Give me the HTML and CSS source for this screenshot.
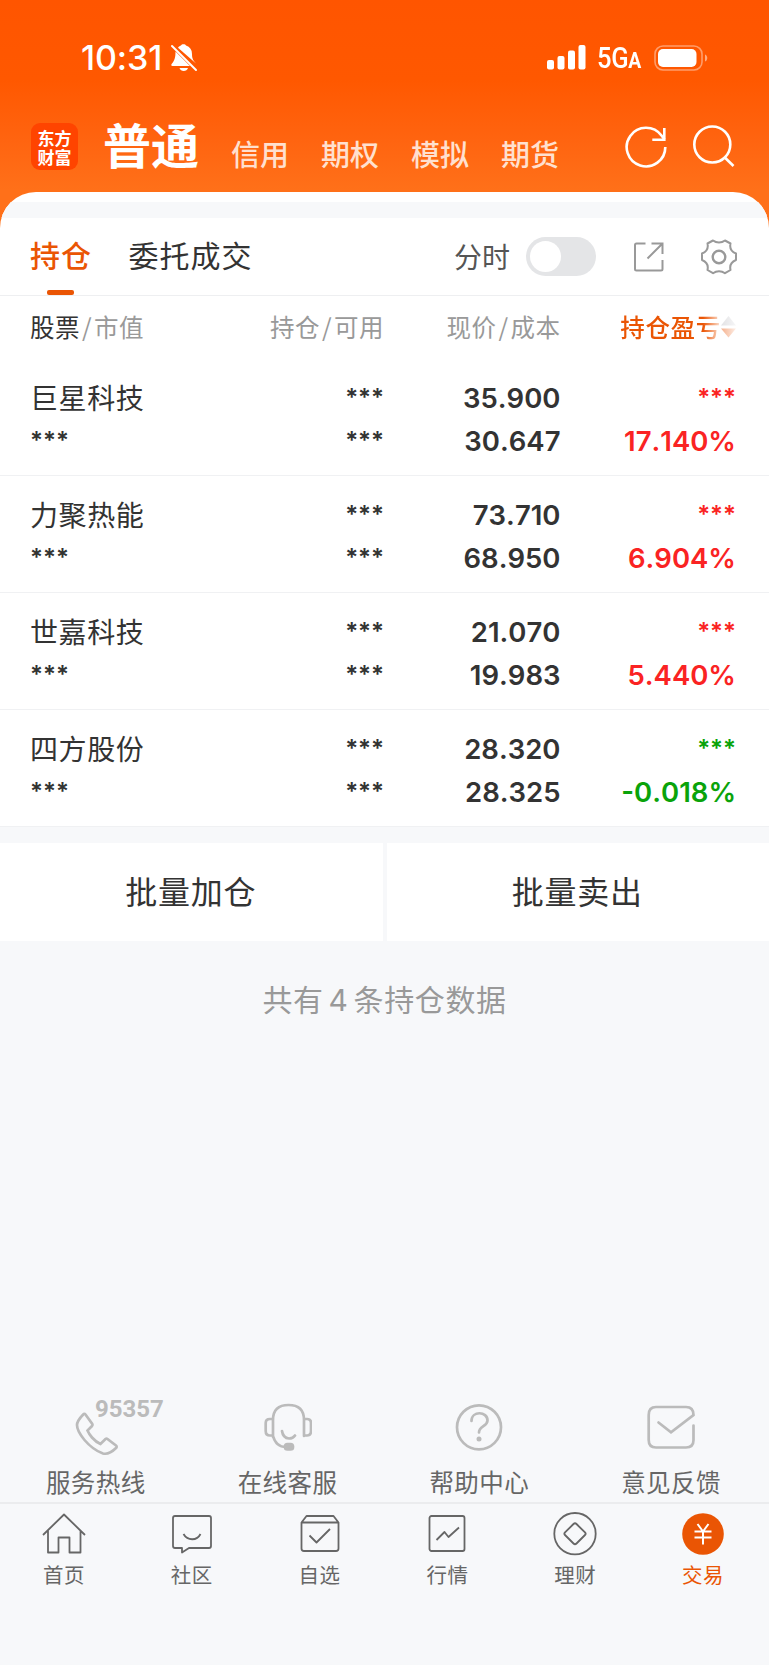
FILE: index.html
```
<!DOCTYPE html>
<html lang="zh-CN">
<head>
	<meta charset="utf-8">
	<title>交易 - 持仓</title>
	<link rel="stylesheet" href="styles.css">
</head>
<body>
	<div class="page">
		<header class="top">
			<div class="status">
				<span class="time">10:31</span>
				<svg class="bell" width="28" height="30" viewBox="0 0 28 30">
					<path fill="#fff" d="M8 4.800C9 3.500 10 3 11 2.600C11.500 .9 15.500 .9 16 2.600C20 4 22 7 22 11C22 15.500 23 17 26 20.500ZM5.500 8.500L20 23H2.500C1 23 1 21.500 2 20.500C4.500 17.500 5.500 15 5.500 8.500ZM9.500 25H18C17 29 10.500 29 9.500 25Z"/>
					<path stroke="#fff" stroke-width="2" stroke-linecap="round" d="M2 3L26 27"/>
				</svg>
				<svg class="signal" width="39" height="25" viewBox="0 0 39 25" fill="#fff">
					<rect x="0" y="15" width="7" height="9.500" rx="2"/>
					<rect x="10.500" y="11" width="7" height="13.500" rx="2"/>
					<rect x="21" y="5.500" width="7" height="19" rx="2"/>
					<rect x="31.500" y="0" width="7" height="24.500" rx="2"/>
				</svg>
				<span class="net">5G<small>A</small></span>
				<svg class="battery" width="54" height="26" viewBox="0 0 54 26">
					<rect x="1" y="1" width="47" height="24" rx="8" fill="none" stroke="#fff" stroke-opacity=".42" stroke-width="1.600"/>
					<rect x="4" y="4" width="38.500" height="18" rx="5" fill="#fff"/>
					<path d="M51 9.500C54 10.500 54 15.500 51 16.500Z" fill="#fff" fill-opacity=".5"/>
				</svg>
			</div>
			<nav class="accounts">
				<div class="logo"><span>东方</span><span>财富</span></div>
				<a class="account active">普通</a>
				<a class="account">信用</a>
				<a class="account">期权</a>
				<a class="account">模拟</a>
				<a class="account">期货</a>
				<svg class="refresh" width="44" height="44" viewBox="0 0 44 44" fill="none" stroke="#fff" stroke-width="2.600">
					<path d="M41.300 22A19.300 19.300 0 1 1 37.500 10.600L40.500 14.500"/>
					<path d="M40.300 3V14.700H28.300"/>
				</svg>
				<svg class="search" width="44" height="44" viewBox="0 0 44 44" fill="none" stroke="#fff" stroke-width="2.600">
					<circle cx="20.300" cy="19.500" r="18"/>
					<path d="M32.800 32.500L41.500 41"/>
				</svg>
			</nav>
		</header>

		<main class="card">
			<div class="strip"></div>
			<div class="tabs">
				<a class="tab active">持仓</a>
				<a class="tab">委托成交</a>
				<span class="label">分时</span>
				<span class="switch"></span>
				<svg class="share" width="30" height="30" viewBox="0 0 30 30" fill="none" stroke="#999" stroke-width="2">
					<path d="M11.500 1.500H2.500Q1 1.500 1 3V27Q1 28.500 2.500 28.500H27Q28.500 28.500 28.500 27V18"/>
					<path d="M17.500 1.500H28.500V12M28 2L13.500 16.500"/>
				</svg>
				<svg class="gear" width="38" height="36" viewBox="0 0 38 36" fill="none" stroke="#999" stroke-width="2">
					<path stroke-linejoin="round" d="M13 1.500C15 3 17 3.500 19 3.500S23 3 25 1.500L30.500 4.500C29.500 9 31 12.500 36 14.500V21C31 23 29.500 26.500 30.500 31L25 34.200C23 32.700 21 32.200 19 32.200S15 32.700 13 34.200L7.500 31C8.500 26.500 7 23 2 21V14.500C7 12.500 8.500 9 7.500 4.500Z"/>
					<circle cx="19" cy="18" r="6.300" stroke-width="2.400"/>
				</svg>
			</div>

			<div class="row head">
				<div class="col"><b>股票</b><i>/</i>市值</div>
				<div class="col">持仓<i>/</i>可用</div>
				<div class="col">现价<i>/</i>成本</div>
				<div class="col sort">
					<span>持仓盈亏</span>
					<svg width="15" height="22" viewBox="0 0 15 22">
						<path d="M7.500 0L15 9.500H0Z" fill="url(#sortUp)"/>
						<path d="M0 12.500H15L7.500 21.500Z" fill="url(#sortDown)"/>
						<defs>
							<linearGradient id="sortUp"><stop stop-color="#e2e2e4"/><stop offset="1" stop-color="#f6f6f7"/></linearGradient>
							<linearGradient id="sortDown"><stop stop-color="#f5b08c"/><stop offset="1" stop-color="#fdeee6"/></linearGradient>
						</defs>
					</svg>
				</div>
			</div>

			<div class="row stock">
				<div class="col"><p class="name">巨星科技</p><p class="mask">***</p></div>
				<div class="col"><p class="mask">***</p><p class="mask">***</p></div>
				<div class="col"><p>35.900</p><p>30.647</p></div>
				<div class="col up"><p class="mask">***</p><p>17.140%</p></div>
			</div>
			<div class="row stock">
				<div class="col"><p class="name">力聚热能</p><p class="mask">***</p></div>
				<div class="col"><p class="mask">***</p><p class="mask">***</p></div>
				<div class="col"><p>73.710</p><p>68.950</p></div>
				<div class="col up"><p class="mask">***</p><p>6.904%</p></div>
			</div>
			<div class="row stock">
				<div class="col"><p class="name">世嘉科技</p><p class="mask">***</p></div>
				<div class="col"><p class="mask">***</p><p class="mask">***</p></div>
				<div class="col"><p>21.070</p><p>19.983</p></div>
				<div class="col up"><p class="mask">***</p><p>5.440%</p></div>
			</div>
			<div class="row stock">
				<div class="col"><p class="name">四方股份</p><p class="mask">***</p></div>
				<div class="col"><p class="mask">***</p><p class="mask">***</p></div>
				<div class="col"><p>28.320</p><p>28.325</p></div>
				<div class="col down"><p class="mask">***</p><p>-0.018%</p></div>
			</div>
		</main>

		<div class="batch">
			<a>批量加仓</a>
			<a>批量卖出</a>
		</div>
		<p class="total">共有<span>4</span>条持仓数据</p>

		<section class="services">
			<a class="service">
				<svg width="48" height="56" viewBox="0 0 48 56">
					<path d="M11.200 14.500Q12.300 13 13.500 14.500L20.300 24Q20.800 25 20 26L15.500 30.500Q17 34 20 37.500Q24 42 28.500 44L33.500 39Q34.500 38.200 35.500 39L44 45.500Q45.300 46.500 44 48Q37 55 31 53.500Q21 50 12.500 40Q5 31 5 25Q5 21 11.200 14.500Z"/>
				</svg>
				<em>95357</em>
				服务热线
			</a>
			<a class="service">
				<svg width="48" height="56" viewBox="0 0 48 56">
					<path d="M9 37V20Q9 5 24.500 5T40 20V36M9 19H6Q1.700 19 1.700 23V31Q1.700 35.500 6 35.500H9M40 19H43Q47 19 47 23V31Q47 35.500 43 35.500H40M9 36Q12 47 22 47M18 31Q19 38 25 38.500Q29 38.500 31 35.500"/>
					<rect class="solid" x="21" y="44" width="8" height="5.500" rx="2.500"/>
				</svg>
				在线客服
			</a>
			<a class="service">
				<svg width="48" height="56" viewBox="0 0 48 56">
					<circle cx="24" cy="27.300" r="22"/>
					<path d="M16.500 21C16.500 10.500 32.500 11 32.500 20.500C32.500 26.500 24 26 24 32.500"/>
					<circle class="solid dot" cx="24" cy="39" r="2.500"/>
				</svg>
				帮助中心
			</a>
			<a class="service">
				<svg width="48" height="56" viewBox="0 0 48 56">
					<path d="M46.500 25.500V40Q46.500 47.500 39 47.500H9Q1.700 47.500 1.700 40V15Q1.700 7 9 7H39Q46.500 7 46.500 15L24 32.300L11.500 22.500"/>
				</svg>
				意见反馈
			</a>
		</section>

		<nav class="tabbar">
			<a>
				<svg width="44" height="44" viewBox="0 0 44 44"><path d="M1 23L22 2.500L43 23M6 18.500V40.500H16.500V25.500H27.500V40.500H38.500V18.500"/></svg>
				首页
			</a>
			<a>
				<svg width="44" height="44" viewBox="0 0 44 44"><path d="M5 4H39Q41 4 41 6V34Q41 36 39 36H19L12 40.500V36H5Q3 36 3 34V6Q3 4 5 4ZM13.500 22C17.500 29 27 29 30.500 22"/></svg>
				社区
			</a>
			<a>
				<svg width="44" height="44" viewBox="0 0 44 44"><path d="M3.500 10.500L8.500 4H35.500L40.500 10.500V36.500Q40.500 39 38 39H6Q3.500 39 3.500 36.500ZM3.500 10.500H40.500M11.500 23.500L18.500 30.500L32 17"/></svg>
				自选
			</a>
			<a>
				<svg width="44" height="44" viewBox="0 0 44 44"><rect x="4.500" y="4" width="35" height="35" rx="2"/><path d="M11.500 28L19.500 20L23.500 25L34 15.500"/></svg>
				行情
			</a>
			<a>
				<svg width="44" height="44" viewBox="0 0 44 44"><circle cx="22" cy="21.700" r="20.700"/><path d="M20.500 12Q22 10.500 23.500 12L32 20.300Q33.300 21.700 32 23L23.500 31.500Q22 33 20.500 31.500L12 23Q10.700 21.700 12 20.300Z"/></svg>
				理财
			</a>
			<a class="active">
				<svg width="44" height="44" viewBox="0 0 44 44"><circle class="disc" cx="22" cy="22" r="20.800"/><path class="yen" d="M16.500 12L22 19.500L27.500 12M22 19.500V32.500M13.500 19.500H30.500M13.500 25.500H30.500"/></svg>
				交易
			</a>
		</nav>
	</div>
</body>
</html>
```
FILE: styles.css
```
* {
	box-sizing: border-box;
	margin: 0;
	padding: 0;
}
body {
	background-color: #f7f8fa;
	font-family: "Noto Sans CJK SC", sans-serif;
	color: #333;
}
.page {
	display: flex;
	flex-direction: column;
	width: 769px;
	height: 1665px;
	background: linear-gradient(#ff5500 0, #ff5800 80px, #ff6410 140px, #ff7019 190px, #ff7019 240px, transparent 240px);
}

/* 顶部 */
.top {
	height: 192px;
	color: #fff;
}
.status {
	display: flex;
	align-items: center;
	height: 115px;
	padding-left: 81px;
	font-family: Inter, sans-serif;
}
.time {
	width: 89px;
	font-size: 34px;
	font-weight: 500;
	letter-spacing: -.1px;
}
.signal {
	margin-left: 349px;
}
.net {
	width: 56px;
	margin-left: 11px;
	font-family: Roboto, sans-serif;
	font-size: 29px;
	font-weight: 500;
	letter-spacing: -.3px;
	transform: scaleX(.88);
	transform-origin: 0 50%;
}
.net small {
	font-size: 22px;
	font-weight: 700;
}
.battery {
	margin-left: 1px;
}
.accounts {
	display: flex;
	align-items: center;
	height: 64px;
	padding-left: 31px;
}
.logo {
	display: flex;
	flex-direction: column;
	align-items: center;
	justify-content: center;
	gap: 2px;
	width: 47px;
	height: 47px;
	margin: -1px 25px 0 0;
	background-color: #ff4400;
	border-radius: 9px;
	font-size: 17px;
	font-weight: 700;
	line-height: 17px;
}
.logo span {
	height: 17px;
}
.account {
	width: 90px;
	padding-top: 12px;
	font-size: 29px;
	font-weight: 500;
	line-height: 40px;
	color: #ffe0cf;
}
.account.active {
	width: 128px;
	padding: 0 0 8px;
	font-size: 48px;
	font-weight: 700;
	color: #fff;
}
.refresh {
	margin-left: 32.500px;
}
.search {
	margin-left: 24.500px;
}

/* 持仓列表 */
.card {
	background-color: #fff;
	border-radius: 36px 36px 0 0;
	overflow: hidden;
	flex: none;
}
.strip {
	height: 16px;
	margin-top: 10px;
	background-color: #f7f8fa;
}
.tabs {
	display: flex;
	align-items: center;
	height: 78px;
	padding-left: 30px;
	border-bottom: 1px solid #eeeff1;
}
.tab {
	position: relative;
	height: 77px;
	margin-right: 36.500px;
	font-size: 30px;
	letter-spacing: 1px;
	line-height: 73px;
}
.tab.active {
	color: #ea5504;
	font-weight: 500;
}
.tab.active::after {
	content: "";
	position: absolute;
	left: 17px;
	bottom: 0;
	width: 27px;
	height: 5px;
	background-color: #ea5504;
	border-radius: 2px;
}
.label {
	width: 72px;
	margin: -2px 0 0 auto;
	font-size: 28px;
	color: #555;
}
.switch {
	width: 70px;
	height: 39px;
	padding: 4px;
	background-color: #e4e5e7;
	border-radius: 20px;
}
.switch::before {
	content: "";
	display: block;
	width: 31px;
	height: 31px;
	background-color: #fff;
	border-radius: 50%;
}
.share {
	margin-left: 38px;
}
.gear {
	margin: 0 31px 0 36px;
}
.row {
	display: grid;
	grid-template-columns: 200px 154px 176.500px 175.500px;
	padding-left: 30px;
}
.col {
	text-align: right;
}
.col:first-child {
	text-align: left;
}
.head {
	height: 63px;
	font-size: 24.500px;
	letter-spacing: .5px;
	line-height: 61px;
	color: #999;
}
.head b {
	font-weight: 400;
	color: #333;
}
.head i {
	margin: 0 2px;
	font-style: normal;
}
.sort {
	display: flex;
	align-items: center;
	justify-content: flex-end;
	height: 61px;
	letter-spacing: .7px;
	color: #ea5504;
	font-weight: 500;
}
.sort span {
	-webkit-mask-image: linear-gradient(to right, #000 82%, rgba(0,0,0,.15));
	mask-image: linear-gradient(to right, #000 82%, rgba(0,0,0,.15));
}
.stock {
	height: 117px;
	padding-top: 18px;
	border-bottom: 1px solid #f0f1f3;
	font-family: Inter, sans-serif;
	font-size: 27.500px;
	font-weight: 600;
	font-kerning: none;
	line-height: 42.500px;
}
.stock p {
	height: 42.500px;
}
.stock .name {
	font-family: "Noto Sans CJK SC", sans-serif;
	font-size: 28px;
	font-weight: 400;
	letter-spacing: .6px;
	line-height: 40px;
}
.stock .mask {
	font-size: 24px;
}
.up {
	color: #fa2323;
}
.down {
	color: #0aa30a;
}

/* 批量操作 */
.batch {
	display: flex;
	gap: 4px;
	flex: none;
	padding-top: 16px;
	background-color: #f7f8fa;
}
.batch a {
	flex: 1;
	height: 98px;
	padding-right: 1px;
	background-color: #fff;
	font-size: 32px;
	letter-spacing: .7px;
	line-height: 95px;
	text-align: center;
}
.total {
	flex: 1;
	padding-top: 35px;
	background-color: #f7f8fa;
	font-size: 30px;
	letter-spacing: .6px;
	line-height: 44px;
	text-align: center;
	color: #999;
}
.total span {
	margin: 0 5px;
	font-family: Inter, sans-serif;
}

/* 服务入口 */
.services {
	display: grid;
	grid-template-columns: repeat(4, 1fr);
	height: 102px;
	padding-right: 2px;
	color: #666;
	background-color: #f7f8fa;
}
.service {
	position: relative;
	display: flex;
	flex-direction: column;
	align-items: center;
	font-size: 24.500px;
	letter-spacing: .5px;
	line-height: 51px;
}
.service svg {
	fill: none;
	stroke: #bbb;
	stroke-width: 2.700;
	stroke-linecap: round;
	flex: none;
}
.service .solid {
	fill: #bbb;
}
.service .dot {
	stroke: none;
}
.service em {
	position: absolute;
	left: 95px;
	top: -3px;
	font: 700 24px/24px Roboto, sans-serif;
	letter-spacing: 0;
	color: #bbb;
}

/* 底部导航 */
.tabbar {
	display: grid;
	grid-template-columns: repeat(6, 1fr);
	height: 163px;
	padding: 8px 2px 0 0;
	background-color: #f7f8fa;
	border-top: 2px solid #ebecee;
	color: #666;
}
.tabbar a {
	display: flex;
	flex-direction: column;
	align-items: center;
	font-size: 20.500px;
	letter-spacing: .5px;
	line-height: 36px;
}
.tabbar svg {
	fill: none;
	stroke: #666;
	stroke-width: 1.800;
	stroke-linejoin: round;
}
.tabbar .active {
	color: #ea5504;
}
.tabbar .disc {
	fill: #ea5504;
	stroke: none;
}
.tabbar .yen {
	stroke: #fff;
	stroke-width: 2;
}
```
